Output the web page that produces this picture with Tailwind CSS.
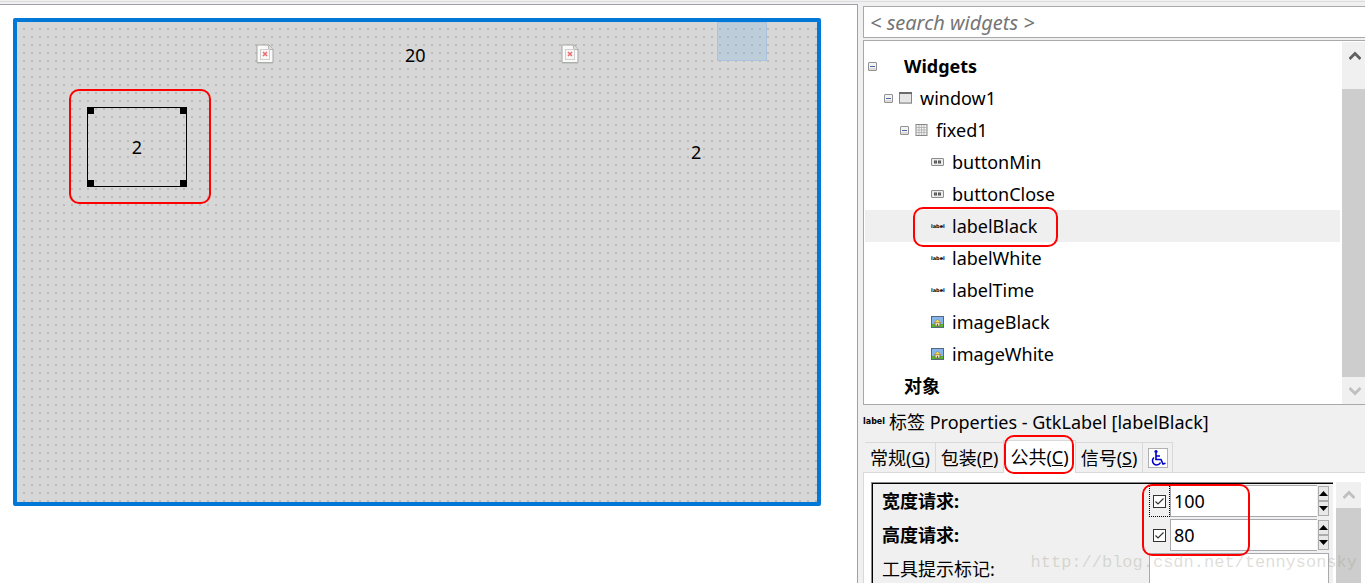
<!DOCTYPE html>
<html lang="zh-CN">
    <head>
        <meta charset="UTF-8" />
        <meta name="viewport" content="width=device-width, initial-scale=1.0" />
        <title>Glade - labelBlack</title>
        <script src="https://cdn.jsdelivr.net/npm/@tailwindcss/browser@4"></script>
    </head>
    <body
        class="relative flex h-screen flex-col overflow-hidden bg-[#f0f0f0] pt-px font-['Noto_Sans','Noto_Sans_CJK_SC',sans-serif] text-[18px] leading-6 text-black"
    >
        <!-- Shared icons -->
        <svg class="absolute size-0">
            <symbol id="minus" viewBox="0 0 9 9">
                <rect x="0.5" y="0.5" width="8" height="8" rx="0.5" fill="#f4f4f4" stroke="#919191" />
                <path d="M1 6h7v2H1z" fill="#dddddd" />
                <path d="M2 4.5h5" stroke="#4b63a7" />
            </symbol>
            <symbol id="window" viewBox="0 0 13 12">
                <rect x="0.5" y="0.5" width="12" height="10.5" fill="#e6e6e6" stroke="#858585" />
                <path d="M0 1h13" stroke="#6b6b6b" stroke-width="2" />
                <path d="M0 11.5h13" stroke="#aaaaaa" />
            </symbol>
            <symbol id="fixed" viewBox="0 0 12 12">
                <rect x="0.5" y="0.5" width="11" height="11" fill="#f2f2f2" stroke="#858585" />
                <path d="M3.5 1v10M6 1v10M8.5 1v10M1 3.5h10M1 6h10M1 8.5h10" stroke="#a5a5a5" stroke-width="0.7" />
            </symbol>
            <symbol id="button" viewBox="0 0 13 8">
                <rect x="0.5" y="0.5" width="12" height="7" rx="0.5" fill="#ececec" stroke="#8c8c8c" />
                <path d="M3 2.500h3v3H3zM7 2.500h3v3H7z" fill="#555555" />
                <path d="M4 4h1M8 4h1" stroke="#888888" />
            </symbol>
            <symbol id="image" viewBox="0 0 13 12">
                <rect x="0.5" y="0.5" width="12" height="11" fill="#86b6ee" stroke="#56697a" />
                <path d="M1 8h11v3H1z" fill="#59b52c" />
                <path d="M4 6.500h5V10H4z" fill="#f0e6b8" stroke="#6b6450" stroke-width="0.8" />
                <path d="M3 6.700 6.500 3.200 10 6.700z" fill="#ffd84a" stroke="#8a7a3a" stroke-width="0.6" />
                <path d="M6 8h1v2H6z" fill="#5a5648" />
            </symbol>
            <symbol id="missing" viewBox="0 0 18 20">
                <path d="M1 1h12l4 4.5V18.5H1z" fill="#fafafa" stroke="#a5a5a2" />
                <path d="M1 19h16" stroke="#b4b4b1" />
                <path d="M12 1l1 4.5h4" fill="#dededb" stroke="#b2b2af" />
                <rect x="4.5" y="5.5" width="9" height="10" fill="#f7f7f7" stroke="#cfcfcd" />
                <path d="M7 8l4 4M11 8l-4 4" stroke="#f0686c" stroke-width="1.5" />
            </symbol>
            <symbol id="chevron" viewBox="0 0 12 10">
                <path d="M0.5 8 6 2.5 11.5 8" fill="none" stroke="currentColor" stroke-width="2.8" />
            </symbol>
            <symbol id="triangle" viewBox="0 0 9 5">
                <path d="M0 5 4.5 0 9 5z" fill="currentColor" />
            </symbol>
            <symbol id="tick" viewBox="0 0 13 13">
                <path d="M2.5 6.5 5 9l5.500-5.500" fill="none" stroke="#333333" stroke-width="1.2" />
            </symbol>
            <pattern id="dots" x="6" y="6" width="8" height="8" patternUnits="userSpaceOnUse">
                <rect width="2" height="2" fill="#bbbbbb" />
            </pattern>
        </svg>

        <div class="flex min-h-0 flex-1 border-t border-[#dcdcdc]">
            <!-- Design area -->
            <main class="mt-0.5 min-w-0 flex-1 overflow-hidden border-t border-r border-[#a0a0a8] bg-white pt-[13px] pl-[13px]">
                <div class="relative h-[488px] w-[808px] rounded-xs border-4 border-[#0078d7] bg-[#d7d7d7]">
                    <svg class="absolute inset-0 size-full"><rect width="100%" height="100%" fill="url(#dots)" /></svg>
                    <svg class="absolute top-[22px] left-[239px] h-5 w-[18px]"><use href="#missing" /></svg>
                    <svg class="absolute top-[22px] left-[544px] h-5 w-[18px]"><use href="#missing" /></svg>
                    <span class="absolute top-[21px] left-[388px]">20</span>
                    <span class="absolute top-[118px] left-[674px]">2</span>
                    <div class="absolute top-0 left-[700px] h-[39px] w-[50px] border border-[#a9c4dc] bg-[#8cbbe0]/35"></div>
                    <!-- Selected label with its resize handles -->
                    <div class="absolute top-[85px] left-[70px] flex h-20 w-[100px] items-center justify-center border border-black">
                        <span>2</span>
                        <i class="absolute top-0 left-0 size-1.5 bg-black"></i>
                        <i class="absolute top-0 right-0 size-1.5 bg-black"></i>
                        <i class="absolute bottom-0 left-0 size-1.5 bg-black"></i>
                        <i class="absolute right-0 bottom-0 size-1.5 bg-black"></i>
                    </div>
                    <div class="absolute top-[67px] left-[52px] h-[115px] w-[142px] rounded-[10px] border-2 border-[#ff0000]"></div>
                </div>
            </main>

            <aside class="ml-[5px] flex w-[502px] shrink-0 flex-col pt-1">
                <input
                    type="text"
                    aria-label="search widgets"
                    placeholder="&lt; search widgets &gt;"
                    class="h-8 border border-r-0 border-[#a9a9ad] bg-white px-1.5 text-[20px] italic placeholder:text-[#757575]"
                />

                <!-- Widget tree -->
                <div class="mt-0.5 flex h-[365px] shrink-0 border border-r-0 border-[#a9a9ad] bg-white pt-px pl-px">
                    <ul class="flex-1 pt-2 pr-0.5 [&>li]:flex [&>li]:h-8 [&>li]:items-center">
                        <li class="pl-[3px] font-bold">
                            <button class="size-[9px]" aria-label="Collapse"><svg class="size-full"><use href="#minus" /></svg></button>
                            <span class="ml-[27px]">Widgets</span>
                        </li>
                        <li class="pl-[19px]">
                            <button class="size-[9px]" aria-label="Collapse"><svg class="size-full"><use href="#minus" /></svg></button>
                            <svg class="ml-1.5 h-3 w-[13px]"><use href="#window" /></svg>
                            <span class="ml-2">window1</span>
                        </li>
                        <li class="pl-[35px]">
                            <button class="size-[9px]" aria-label="Collapse"><svg class="size-full"><use href="#minus" /></svg></button>
                            <svg class="ml-1.5 h-3 w-[13px]"><use href="#fixed" /></svg>
                            <span class="ml-2">fixed1</span>
                        </li>
                        <li class="pl-[66px]">
                            <svg class="h-2 w-[13px]"><use href="#button" /></svg>
                            <span class="ml-2">buttonMin</span>
                        </li>
                        <li class="pl-[66px]">
                            <svg class="h-2 w-[13px]"><use href="#button" /></svg>
                            <span class="ml-2">buttonClose</span>
                        </li>
                        <li class="relative bg-[#efefef] pl-[66px]">
                            <span class="w-[13px] font-['DejaVu_Sans',sans-serif] text-[5px] leading-3 font-bold">label</span>
                            <span class="ml-2">labelBlack</span>
                            <div class="absolute -top-[3px] left-12 h-10 w-[145px] rounded-[10px] border-2 border-[#ff0000]"></div>
                        </li>
                        <li class="pl-[66px]">
                            <span class="w-[13px] font-['DejaVu_Sans',sans-serif] text-[5px] leading-3 font-bold">label</span>
                            <span class="ml-2">labelWhite</span>
                        </li>
                        <li class="pl-[66px]">
                            <span class="w-[13px] font-['DejaVu_Sans',sans-serif] text-[5px] leading-3 font-bold">label</span>
                            <span class="ml-2">labelTime</span>
                        </li>
                        <li class="pl-[66px]">
                            <svg class="h-3 w-[13px]"><use href="#image" /></svg>
                            <span class="ml-2">imageBlack</span>
                        </li>
                        <li class="pl-[66px]">
                            <svg class="h-3 w-[13px]"><use href="#image" /></svg>
                            <span class="ml-2">imageWhite</span>
                        </li>
                        <li class="pl-[39px] font-bold">对象</li>
                    </ul>
                    <div class="flex w-[23px] flex-col bg-[#f0f0f0]">
                        <button class="flex h-[47px] justify-center pt-[9px] pl-0.5 text-[#606060]" aria-label="Scroll up">
                            <svg class="h-2.5 w-3"><use href="#chevron" /></svg>
                        </button>
                        <div class="flex-1 bg-[#cdcdcd]"></div>
                        <button class="flex h-[27px] items-center justify-center pl-0.5 text-[#bfbfbf]" aria-label="Scroll down">
                            <svg class="h-2.5 w-3 rotate-180"><use href="#chevron" /></svg>
                        </button>
                    </div>
                </div>

                <h2 class="flex h-[34px] shrink-0 items-center whitespace-nowrap">
                    <span class="w-[26px] font-['DejaVu_Sans',sans-serif] text-[8px] font-bold">label</span>
                    标签 Properties - GtkLabel [labelBlack]
                </h2>

                <!-- Property tabs -->
                <div class="relative z-10 -mb-px flex h-[34px] shrink-0 items-end pl-0.5 whitespace-nowrap" role="tablist">
                    <button class="h-[31px] w-[70px] border-t border-[#d9d9d9]" role="tab">常规(<u>G</u>)</button>
                    <button class="h-[31px] w-[68px] border-t border-l border-[#d9d9d9]" role="tab">包装(<u>P</u>)</button>
                    <button class="relative h-[33px] w-[73px] border-x border-t border-[#d9d9d9] bg-white" role="tab" aria-selected="true">
                        公共(<u>C</u>)
                        <span class="absolute -top-1.5 left-0 h-[39px] w-[70px] rounded-[10px] border-2 border-[#ff0000]"></span>
                    </button>
                    <button class="h-[31px] w-[66px] border-t border-[#d9d9d9]" role="tab">信号(<u>S</u>)</button>
                    <button class="flex h-[31px] w-[31px] items-center justify-center border-x border-t border-[#d9d9d9]" role="tab" aria-label="Accessibility">
                        <svg class="size-5 border border-[#b0b0b0] bg-white" viewBox="0 0 18 18" fill="none" stroke="#0000c8" stroke-width="1.6">
                            <circle cx="7" cy="2.5" r="1.6" fill="#0000c8" stroke="none" />
                            <path d="M7 4v6.5h5l2 4.5 2.5-.8M7 7h4" />
                            <path d="M5 8.5a4.2 4.2 0 1 0 6.5 5" />
                        </svg>
                    </button>
                </div>

                <div class="flex min-h-0 flex-1 border-t border-l border-[#d9d9d9] bg-white pt-[9px] pr-1 pl-[7px]">
                    <form class="relative h-full min-w-0 flex-1 border-t border-l border-[#8a8a8a]">
                        <div class="h-full border-t border-l border-black bg-[#f0f0f0] pt-px pr-1 pl-[9px]">
                            <div class="mb-0.5 flex h-8 items-center">
                                <label for="width" class="w-[267px] font-bold">宽度请求:</label>
                                <span class="grid h-full w-[21px] place-items-center border border-dotted border-black">
                                    <input type="checkbox" checked aria-label="宽度请求" class="col-start-1 row-start-1 size-[13px] appearance-none border border-[#333333] bg-white" />
                                    <svg class="pointer-events-none col-start-1 row-start-1 size-[13px]"><use href="#tick" /></svg>
                                </span>
                                <input id="width" type="text" value="100" class="h-full min-w-0 flex-1 border border-r-0 border-[#a9a9ad] bg-white pl-[3px]" />
                                <span class="ml-px flex h-[30px] w-[11px] flex-col">
                                    <button type="button" class="flex flex-1 items-center justify-center border border-[#acacac] bg-[#e8e8e8]" aria-label="增加"><svg class="h-[5px] w-[9px]"><use href="#triangle" /></svg></button>
                                    <button type="button" class="flex flex-1 items-center justify-center border border-[#acacac] bg-[#e8e8e8]" aria-label="减少"><svg class="h-[5px] w-[9px] rotate-180"><use href="#triangle" /></svg></button>
                                </span>
                            </div>
                            <div class="mb-0.5 flex h-8 items-center">
                                <label for="height" class="w-[267px] font-bold">高度请求:</label>
                                <span class="grid h-full w-[21px] place-items-center">
                                    <input type="checkbox" checked aria-label="高度请求" class="col-start-1 row-start-1 size-[13px] appearance-none border border-[#333333] bg-white" />
                                    <svg class="pointer-events-none col-start-1 row-start-1 size-[13px]"><use href="#tick" /></svg>
                                </span>
                                <input id="height" type="text" value="80" class="h-full min-w-0 flex-1 border border-r-0 border-[#a9a9ad] bg-white pl-[3px]" />
                                <span class="ml-px flex h-[30px] w-[11px] flex-col">
                                    <button type="button" class="flex flex-1 items-center justify-center border border-[#acacac] bg-[#e8e8e8]" aria-label="增加"><svg class="h-[5px] w-[9px]"><use href="#triangle" /></svg></button>
                                    <button type="button" class="flex flex-1 items-center justify-center border border-[#acacac] bg-[#e8e8e8]" aria-label="减少"><svg class="h-[5px] w-[9px] rotate-180"><use href="#triangle" /></svg></button>
                                </span>
                            </div>
                            <div class="flex h-8 items-center">
                                <label for="tooltip" class="w-[267px]">工具提示标记:</label>
                                <textarea id="tooltip" class="h-full min-w-0 flex-1 resize-none overflow-hidden border border-b-0 border-[#a9a9ad] bg-white"></textarea>
                            </div>
                        </div>
                        <div class="absolute top-px right-[83px] h-[72px] w-[108px] rounded-[10px] border-2 border-[#ff0000]"></div>
                    </form>
                    <div class="ml-[3px] flex w-[25px] flex-col">
                        <button class="flex h-[26px] items-center justify-center bg-[#f0f0f0] text-[#bfbfbf]" aria-label="Scroll up">
                            <svg class="h-2.5 w-3"><use href="#chevron" /></svg>
                        </button>
                        <div class="flex-1 bg-[#cdcdcd]"></div>
                    </div>
                </div>
            </aside>
        </div>

        <p class="pointer-events-none absolute right-2 bottom-2 z-20 font-['Liberation_Mono',monospace] text-[17px] text-[#a0a090]/35">
            http://blog.csdn.net/tennysonsky
        </p>
    </body>
</html>
